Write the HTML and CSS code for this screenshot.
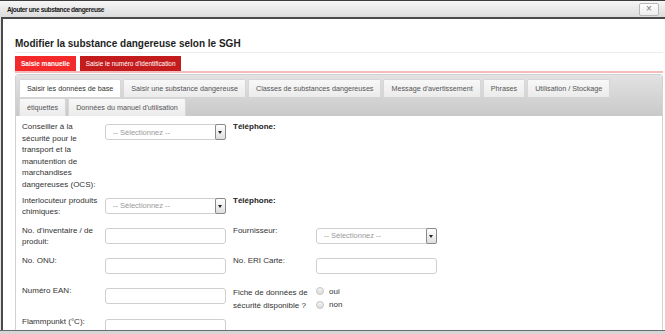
FILE: index.html
```html
<!DOCTYPE html>
<html lang="fr">
  <head>
    <meta charset="UTF-8" />
    <title>Ajouter une substance dangereuse</title>
    <link rel="stylesheet" href="styles.css">
  </head>
  <body>
    <div class="window">
      <!-- Dialog title bar -->
      <div class="titlebar">
        <span class="titlebar-text">Ajouter une substance dangereuse</span>
        <span class="close-btn">&times;</span>
      </div>

      <div class="window-body">
        <div class="frame">
          <h1 class="page-title">Modifier la substance dangereuse selon le SGH</h1>

          <div class="mode-bar">
            <span class="mode-btn active">Saisie manuelle</span>
            <span class="mode-btn">Saisie le numéro d'identification</span>
          </div>

          <div class="tabs-box">
            <div class="tabs-header">
              <span class="tab active">Saisir les données de base</span>
              <span class="tab">Saisir une substance dangereuse</span>
              <span class="tab">Classes de substances dangereuses</span>
              <span class="tab">Message d'avertissement</span>
              <span class="tab">Phrases</span>
              <span class="tab">Utilisation / Stockage</span>
              <span class="tab">étiquettes</span>
              <span class="tab">Données du manuel d'utilisation</span>
            </div>

            <div class="form">
              <div class="row row-first">
                <div class="label">Conseiller à la sécurité pour le transport et la manutention de marchandises dangereuses (OCS):</div>
                <div class="field">
                  <div class="select"><span>-- Sélectionnez --</span><span class="select-btn"></span></div>
                </div>
                <div class="label strong">Téléphone:</div>
                <div class="field"></div>
              </div>

              <div class="row">
                <div class="label">Interlocuteur produits chimiques:</div>
                <div class="field">
                  <div class="select"><span>-- Sélectionnez --</span><span class="select-btn"></span></div>
                </div>
                <div class="label strong">Téléphone:</div>
                <div class="field"></div>
              </div>

              <div class="row">
                <div class="label">No. d'inventaire / de produit:</div>
                <div class="field"><div class="input"></div></div>
                <div class="label">Fournisseur:</div>
                <div class="field">
                  <div class="select"><span>-- Sélectionnez --</span><span class="select-btn"></span></div>
                </div>
              </div>

              <div class="row">
                <div class="label">No. ONU:</div>
                <div class="field"><div class="input"></div></div>
                <div class="label">No. ERI Carte:</div>
                <div class="field"><div class="input"></div></div>
              </div>

              <div class="row">
                <div class="label">Numéro EAN:</div>
                <div class="field"><div class="input"></div></div>
                <div class="label label-tall">Fiche de données de sécurité disponible ?</div>
                <div class="radios">
                  <label class="radio"><span class="radio-dot"></span>oui</label>
                  <label class="radio"><span class="radio-dot"></span>non</label>
                </div>
              </div>

              <div class="row">
                <div class="label">Flammpunkt (°C):</div>
                <div class="field"><div class="input"></div></div>
              </div>
            </div>
          </div>
        </div>

        <!-- Fake window scrollbar -->
        <div class="scrollbar">
          <span class="scroll-arrow up"></span>
          <div class="scroll-thumb"><span class="grip"></span></div>
          <span class="scroll-arrow down"></span>
        </div>
      </div>

      <div class="window-bottom"></div>
    </div>
  </body>
</html>
```

FILE: styles.css
```css
/* Base */
html, body {
  margin: 0;
  padding: 0;
}

body {
  width: 665px;
  height: 334px;
  overflow: hidden;
  background: #5a5a5a;
  font-family: "Liberation Sans", Arial, sans-serif;
  font-size: 8px;
  color: #333;
}

.window {
  width: 665px;
  height: 334px;
  display: flex;
  flex-direction: column;
  background: #e4e4e4;
}

/* Title bar */
.titlebar {
  flex: 0 0 16px;
  display: flex;
  align-items: center;
  justify-content: space-between;
  padding: 0 6px 0 7px;
  border-top: 1px solid #3c3c3c;
  background: linear-gradient(#f6f6f6, #dcdcdc);
}

.titlebar-text {
  font-weight: bold;
  font-size: 6.6px;
  letter-spacing: -0.4px;
  color: #1a1a1a;
}

.close-btn {
  width: 18px;
  height: 11px;
  line-height: 10px;
  text-align: center;
  font-size: 10px;
  color: #777;
  background: linear-gradient(#ffffff, #ececec);
  border: 1px solid #b8b8b8;
  border-radius: 2px;
}

/* Body of window */
.window-body {
  flex: 1;
  display: flex;
  padding-left: 1px;
  min-height: 0;
}

.frame {
  flex: 0 0 648px;
  border: 2px solid #4a4a4a;
  border-bottom: none;
  background: #fff;
  padding: 18px 10px 0 12px;
  overflow: hidden;
}

.page-title {
  margin: 0;
  font-size: 10px;
  line-height: 13px;
  font-weight: bold;
  color: #1e1e1e;
  padding-bottom: 2px;
  border-bottom: 1px solid #ececec;
}

/* Red mode buttons */
.mode-bar {
  margin-top: 3px;
  display: flex;
  gap: 4px;
  border-bottom: 2px solid #f3bcbc;
}

.mode-btn {
  height: 15px;
  line-height: 15px;
  padding: 0 6px;
  color: #fff;
  font-size: 6.4px;
  background: #c41c1c;
}

.mode-btn.active {
  background: #f42a2a;
  font-weight: bold;
  font-size: 6.5px;
}

/* Tabs */
.tabs-box {
  margin-top: 1px;
  border: 1px solid #d2d2d2;
  border-radius: 3px;
  height: 300px;
}

.tabs-header {
  display: flex;
  flex-wrap: wrap;
  gap: 1px 2px;
  padding: 4px 3px 0;
  background: linear-gradient(#e2e2e2, #c9c9c9);
  border-radius: 2px 2px 0 0;
}

.tab {
  height: 17px;
  line-height: 17px;
  padding: 0 7px;
  font-size: 7.2px;
  color: #555;
  background: linear-gradient(#f8f8f8, #ebebeb);
  border: 1px solid #d6d6d6;
  border-bottom: none;
  border-radius: 2px 2px 0 0;
}

.tab.active {
  background: #fff;
  color: #333;
}

/* Form */
.form {
  padding: 5px 0 0 6px;
}

.row {
  display: grid;
  grid-template-columns: 83px 128px 83px auto;
  align-items: start;
  min-height: 30px;
  padding-bottom: 4px;
  box-sizing: border-box;
}

.label {
  max-width: 80px;
  line-height: 11.6px;
  color: #333;
}

.label.strong {
  font-weight: bold;
  color: #222;
}

.label-tall {
  line-height: 13px;
  padding-top: 1px;
}

.field {
  padding-top: 3px;
}

.select,
.input {
  width: 121px;
  height: 16px;
  box-sizing: border-box;
  border: 1px solid #cfcfcf;
  border-radius: 3px;
  background: #fff;
}

.select {
  display: flex;
  align-items: center;
  justify-content: space-between;
  padding-left: 7px;
  font-size: 7.5px;
  color: #9a9a9a;
}

.select-btn {
  position: relative;
  width: 9px;
  height: 14px;
  margin-right: -1px;
  border: 1px solid #8a8a8a;
  border-radius: 2px;
  background: linear-gradient(#ffffff, #dedede);
}

.select-btn::after {
  content: "";
  position: absolute;
  left: 2px;
  top: 6px;
  border-left: 2.5px solid transparent;
  border-right: 2.5px solid transparent;
  border-top: 3px solid #222;
}

.radios {
  display: flex;
  flex-direction: column;
}

.radio {
  display: flex;
  align-items: center;
  height: 13.5px;
  color: #333;
}

.radio-dot {
  width: 6px;
  height: 6px;
  margin-right: 5px;
  border: 1px solid #c4c4c4;
  border-radius: 50%;
  background: linear-gradient(#f4f4f4, #dcdcdc);
}

/* Scrollbar */
.scrollbar {
  flex: 0 0 10px;
  margin-left: 2px;
  display: flex;
  flex-direction: column;
  align-items: center;
  background: #e8e8e8;
  border-left: 1px solid #f4f4f4;
  border-right: 1px solid #6a6a6a;
}

.scroll-arrow {
  flex: 0 0 8px;
  width: 0;
  height: 0;
  position: relative;
}

.scroll-arrow.up::after,
.scroll-arrow.down::after {
  content: "";
  position: absolute;
  left: -2px;
  border-left: 2px solid transparent;
  border-right: 2px solid transparent;
}

.scroll-arrow.up::after {
  top: 3px;
  border-bottom: 2px solid #444;
}

.scroll-arrow.down {
  margin-top: auto;
}

.scroll-arrow.down::after {
  top: 2px;
  border-top: 2px solid #444;
}

.scroll-thumb {
  flex: 0 0 240px;
  margin-top: 2px;
  width: 8px;
  box-sizing: border-box;
  border: 1px solid #b4b4b4;
  border-radius: 2px;
  background: linear-gradient(90deg, #eeeeee, #d6d6d6);
  display: flex;
  align-items: center;
  justify-content: center;
}

.grip {
  width: 4px;
  height: 5px;
  background: repeating-linear-gradient(#9a9a9a 0 1px, transparent 1px 2px);
}

.window-bottom {
  flex: 0 0 3px;
  border-top: 1px solid #6c6c6c;
  background: #d6d6d6;
}
```
